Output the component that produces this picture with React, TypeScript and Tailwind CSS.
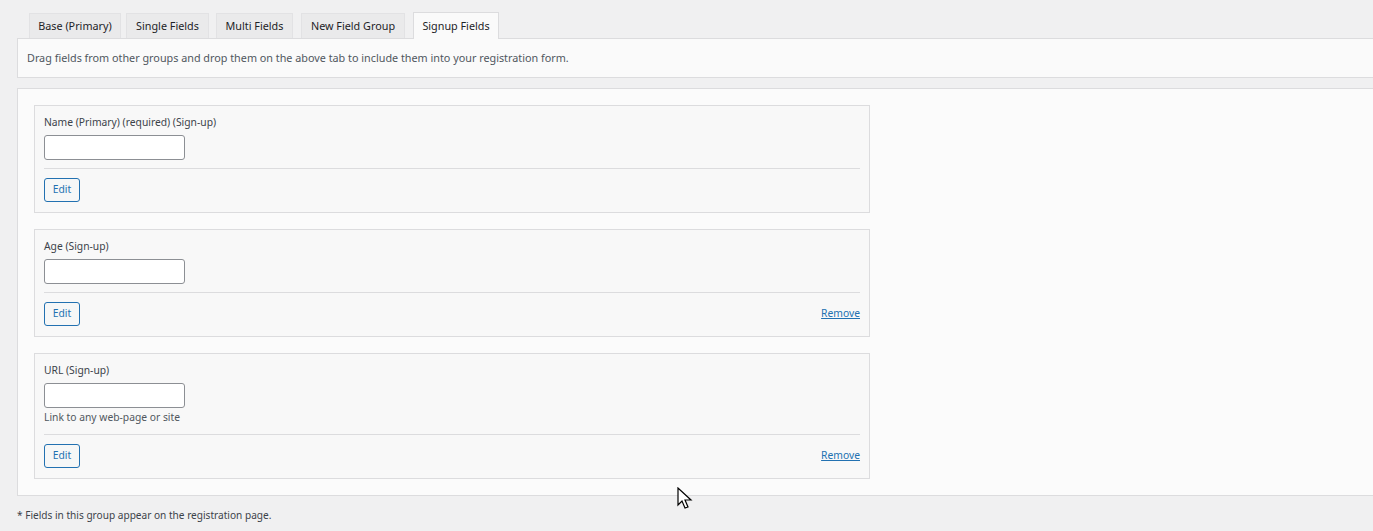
import React from "react";

const font = { fontFamily: '"Noto Sans", "Open Sans", Arial, sans-serif' };

function Tab({ label, active, w, ml }: { label: string; active?: boolean; w: string; ml: string }) {
  if (active) {
    return (
      <div className={`${w} ${ml} h-[27px] -mb-px flex items-center justify-center border border-b-0 border-[#dcdcde] bg-[#fafafa] text-[10.8px] text-[#1d2327] relative z-10`}>
        {label}
      </div>
    );
  }
  return (
    <div className={`${w} ${ml} h-[25px] flex items-center justify-center border border-b-0 border-[#e2e2e4] bg-[#eaeaeb] text-[10.8px] text-[#1d2327]`}>
      {label}
    </div>
  );
}

function Card({
  label,
  help,
  removable,
}: {
  label: string;
  help?: string;
  removable?: boolean;
}) {
  return (
    <div className="w-[836px] border border-[#dcdcde] bg-[#f8f8f8] px-[9px] pt-[9px] pb-[10px]">
      <div className="text-[10.3px] leading-[14px] text-[#3c434a] mb-[6px]">{label}</div>
      <div className="w-[141px] h-[25px] rounded-[3px] border border-[#8c8f94] bg-white" />
      {help && <div className="text-[10.3px] leading-[14px] text-[#50575e] mt-[2px] pb-[2px]">{help}</div>}
      <div className="h-px bg-[#dcdcde] mt-[8px] mb-[9px]" />
      <div className="flex items-center justify-between">
        <button className="h-[24px] w-[36px] rounded-[3px] border border-[#2271b1] bg-[#f6f7f7] text-[10.3px] text-[#2271b1]">
          Edit
        </button>
        {removable && (
          <span className="text-[10.3px] text-[#2271b1] underline">Remove</span>
        )}
      </div>
    </div>
  );
}

export default function App() {
  return (
    <div className="w-[1373px] h-[531px] overflow-hidden bg-[#f0f0f1] relative" style={font}>
      <div className="pl-[17px] pt-[11px]">
        <div className="flex items-end h-[27px]">
          <Tab label="Base (Primary)" w="w-[92px]" ml="ml-[12px]" />
          <Tab label="Single Fields" w="w-[83px]" ml="ml-[5px]" />
          <Tab label="Multi Fields" w="w-[77px]" ml="ml-[7px]" />
          <Tab label="New Field Group" w="w-[104px]" ml="ml-[8px]" />
          <Tab label="Signup Fields" w="w-[86px]" ml="ml-[8px]" active />
        </div>
        <div className="h-[40px] border-y border-l border-[#dcdcde] bg-[#fafafa] flex items-center pl-[9px] text-[10.8px] text-[#50575e]">
          Drag fields from other groups and drop them on the above tab to include them into your registration form.
        </div>
        <div className="mt-[10px] border-y border-l border-[#dcdcde] bg-[#fbfbfb] pl-[16px] py-[16px] flex flex-col gap-[16px]">
          <Card label="Name (Primary) (required) (Sign-up)" />
          <Card label="Age (Sign-up)" removable />
          <Card label="URL (Sign-up)" help="Link to any web-page or site" removable />
        </div>
        <div className="mt-[12px] text-[10.1px] text-[#3c434a]">
          * Fields in this group appear on the registration page.
        </div>
      </div>
      <svg
        className="absolute left-[677px] top-[487px]"
        width="16"
        height="24"
        viewBox="0 0 16 24"
      >
        <path
          d="M1 1 L1 18 L5 14 L8 21 L11 20 L8 13 L14 13 Z"
          fill="white"
          stroke="black"
          strokeWidth="1.2"
          strokeLinejoin="miter"
        />
      </svg>
    </div>
  );
}
